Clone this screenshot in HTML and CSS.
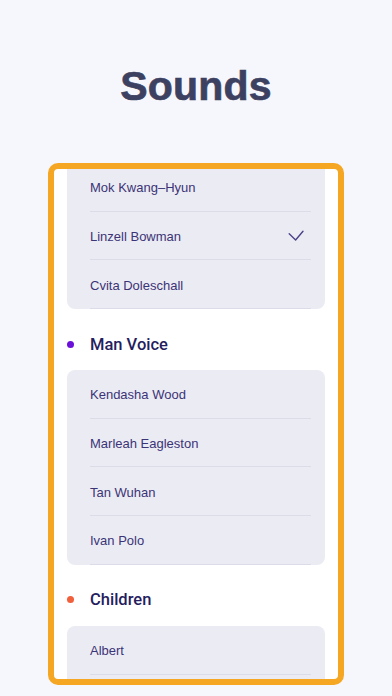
FILE: index.html
```html
<!DOCTYPE html>
<html lang="en">
<head>
    <meta charset="UTF-8">
    <meta name="viewport" content="width=device-width, initial-scale=1.0">
    <title>Sounds</title>
    <link rel="stylesheet" href="styles.css">
</head>
<body>
    <h1 class="title">Sounds</h1>

    <div class="frame">
        <div class="sound-list">
            <!-- list is scrolled a bit, first card runs under the top edge -->
            <div class="card card-first">
                <div class="row">Mok Kwang–Hyun</div>
                <div class="row selected">
                    Linzell Bowman
                    <svg class="check" width="16" height="12" viewBox="0 0 16 12">
                        <polyline points="1.2,3.8 7.6,10 15,1.2" fill="none" stroke="#4a4288" stroke-width="1.4" stroke-linecap="round" stroke-linejoin="round"/>
                    </svg>
                </div>
                <div class="row">Cvita Doleschall</div>
            </div>

            <div class="group-title">
                <span class="dot dot-purple"></span>
                Man Voice
            </div>
            <div class="card">
                <div class="row">Kendasha Wood</div>
                <div class="row">Marleah Eagleston</div>
                <div class="row">Tan Wuhan</div>
                <div class="row">Ivan Polo</div>
            </div>

            <div class="group-title">
                <span class="dot dot-orange"></span>
                Children
            </div>
            <!-- last card goes on below the bottom edge -->
            <div class="card card-last">
                <div class="row">Albert</div>
            </div>
        </div>
    </div>
</body>
</html>
```

FILE: styles.css
```css
body {
    margin: 0;
    width: 392px;
    height: 696px;
    overflow: hidden;
    background-color: #f6f7fc;
    font-family: "Liberation Sans", Arial, sans-serif;
}

.title {
    margin: 0;
    padding-top: 62px;
    height: 48px;
    line-height: 48px;
    font-size: 41px;
    font-weight: 700;
    text-align: center;
    color: #3d4161;
    letter-spacing: 0.2px;
    -webkit-text-stroke: 0.7px #3d4161;
}

.frame {
    box-sizing: border-box;
    margin: 53px 48px 0 48px;
    height: 522px;
    border: 6px solid #f5a623;
    border-radius: 10px;
    background-color: #ffffff;
    overflow: hidden;
}

.sound-list {
    padding: 0 13px 0 13px;
}

.card {
    background-color: #ebebf4;
    border-radius: 8px;
}

.card-first {
    margin-top: -6px;
    border-radius: 0 0 8px 8px;
}

.card-last {
    padding-bottom: 30px;
    border-radius: 8px 8px 0 0;
}

.row {
    display: flex;
    align-items: center;
    justify-content: space-between;
    box-sizing: border-box;
    height: 48.7px;
    margin: 0 14px 0 23px;
    padding: 2px 7px 0 0;
    border-bottom: 1px solid #dcdce9;
    font-size: 13px;
    color: #3b3476;
}

.check {
    display: block;
    margin-top: -2px;
}

.group-title {
    display: flex;
    align-items: center;
    height: 26px;
    margin: 22px 0 13px 0;
    font-family: Roboto, "Liberation Sans", sans-serif;
    font-size: 16.5px;
    font-weight: 500;
    color: #251d5e;
}

.dot {
    width: 7px;
    height: 7px;
    border-radius: 50%;
    margin-right: 16px;
}

.dot-purple {
    background-color: #6a10d8;
}

.dot-orange {
    background-color: #f15f3b;
}
```
